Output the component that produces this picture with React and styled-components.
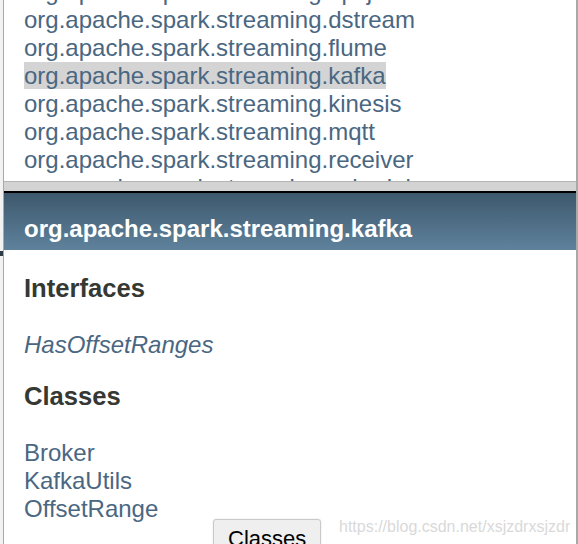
import styled, { createGlobalStyle } from "styled-components";

const GlobalStyle = createGlobalStyle`
  html, body {
    margin: 0;
    padding: 0;
    background: #ffffff;
    overflow: hidden;
  }
  body {
    font-family: "Liberation Sans", Arial, Helvetica, sans-serif;
  }
`;

const Screen = styled.div`
  position: relative;
  display: flex;
  width: 578px;
  height: 544px;
  overflow: hidden;
  background: #ffffff;
`;

const BackStrip = styled.div`
  width: 3px;
  flex: none;
  display: flex;
  flex-direction: column;
  background: #efefef;
  border-right: 1px solid #a9a9a9;
`;

const StripPart = styled.div`
  height: ${(props) => props.h}px;
  flex: ${(props) => (props.grow ? 1 : "none")};
  background: ${(props) => props.color};
`;

const Frames = styled.div`
  flex: 1;
  display: flex;
  flex-direction: column;
  border-right: 2px solid #a9a9a9;
  min-width: 0;
`;

const PackageFrame = styled.div`
  height: 181px;
  flex: none;
  overflow: hidden;
  padding-left: 20px;
`;

const PackageList = styled.ul`
  list-style: none;
  margin: -22px 0 0;
  padding: 0;
`;

const Item = styled.li`
  font-size: 24px;
  line-height: 28px;
  white-space: nowrap;
`;

const Link = styled.a`
  color: #4a6782;
  text-decoration: none;
  font-style: ${(props) => (props.italic ? "italic" : "normal")};
  background: ${(props) => (props.active ? "#d4d4d4" : "transparent")};
`;

const Divider = styled.div`
  height: 12px;
  flex: none;
  box-sizing: border-box;
  background: #d3d3d3;
  border-top: 1px solid #b4b4b4;
  border-bottom: 2px solid #000000;
`;

const ClassFrame = styled.div`
  flex: 1;
  background: #ffffff;
`;

const TitleBar = styled.div`
  height: 57px;
  box-sizing: border-box;
  padding: 22px 20px 0;
  background: linear-gradient(#3d586d, #5f829c);
  color: #ffffff;
  font-size: 24px;
  font-weight: bold;
  line-height: 28px;
  white-space: nowrap;
`;

const Content = styled.div`
  padding: 23px 20px 0;
`;

const Heading = styled.h2`
  margin: 0 0 28px;
  font-size: 25.6px;
  line-height: 30px;
  font-weight: bold;
  color: #353833;
`;

const ClassList = styled.ul`
  list-style: none;
  margin: 0 0 22px;
  padding: 0;
`;

const FloatingButton = styled.button`
  position: absolute;
  left: 213px;
  top: 519px;
  margin: 0;
  padding: 0 14px;
  font-family: "Liberation Sans", Arial, sans-serif;
  font-size: 22px;
  line-height: 37px;
  color: #000000;
  background: #efefef;
  border: 1px solid #c9c9c9;
  border-radius: 3px;
  box-shadow: 0 0 2px rgba(0, 0, 0, 0.12);
`;

const Watermark = styled.div`
  position: absolute;
  left: 339px;
  top: 517px;
  font-size: 16px;
  line-height: 20px;
  color: #d9d9d9;
  white-space: nowrap;
  pointer-events: none;
`;

const packages = [
  "api.java",
  "dstream",
  "flume",
  "kafka",
  "kinesis",
  "mqtt",
  "receiver",
  "scheduler",
];

const App = () => {
  return (
    <>
      <GlobalStyle />
      <Screen>
        <BackStrip>
          <StripPart h={251} color="#f2f2f2" />
          <StripPart h={5} color="#2f3b45" />
          <StripPart grow color="#f2f2f2" />
        </BackStrip>
        <Frames>
          <PackageFrame>
            <PackageList>
              {packages.map((name) => (
                <Item key={name}>
                  <Link href="#" active={name === "kafka"}>
                    org.apache.spark.streaming.{name}
                  </Link>
                </Item>
              ))}
            </PackageList>
          </PackageFrame>
          <Divider />
          <ClassFrame>
            <TitleBar>org.apache.spark.streaming.kafka</TitleBar>
            <Content>
              <Heading>Interfaces</Heading>
              <ClassList>
                <Item>
                  <Link href="#" italic>
                    HasOffsetRanges
                  </Link>
                </Item>
              </ClassList>
              <Heading>Classes</Heading>
              <ClassList>
                <Item>
                  <Link href="#">Broker</Link>
                </Item>
                <Item>
                  <Link href="#">KafkaUtils</Link>
                </Item>
                <Item>
                  <Link href="#">OffsetRange</Link>
                </Item>
              </ClassList>
            </Content>
          </ClassFrame>
        </Frames>
        <FloatingButton>Classes</FloatingButton>
        <Watermark>https://blog.csdn.net/xsjzdrxsjzdr</Watermark>
      </Screen>
    </>
  );
};

export default App;
